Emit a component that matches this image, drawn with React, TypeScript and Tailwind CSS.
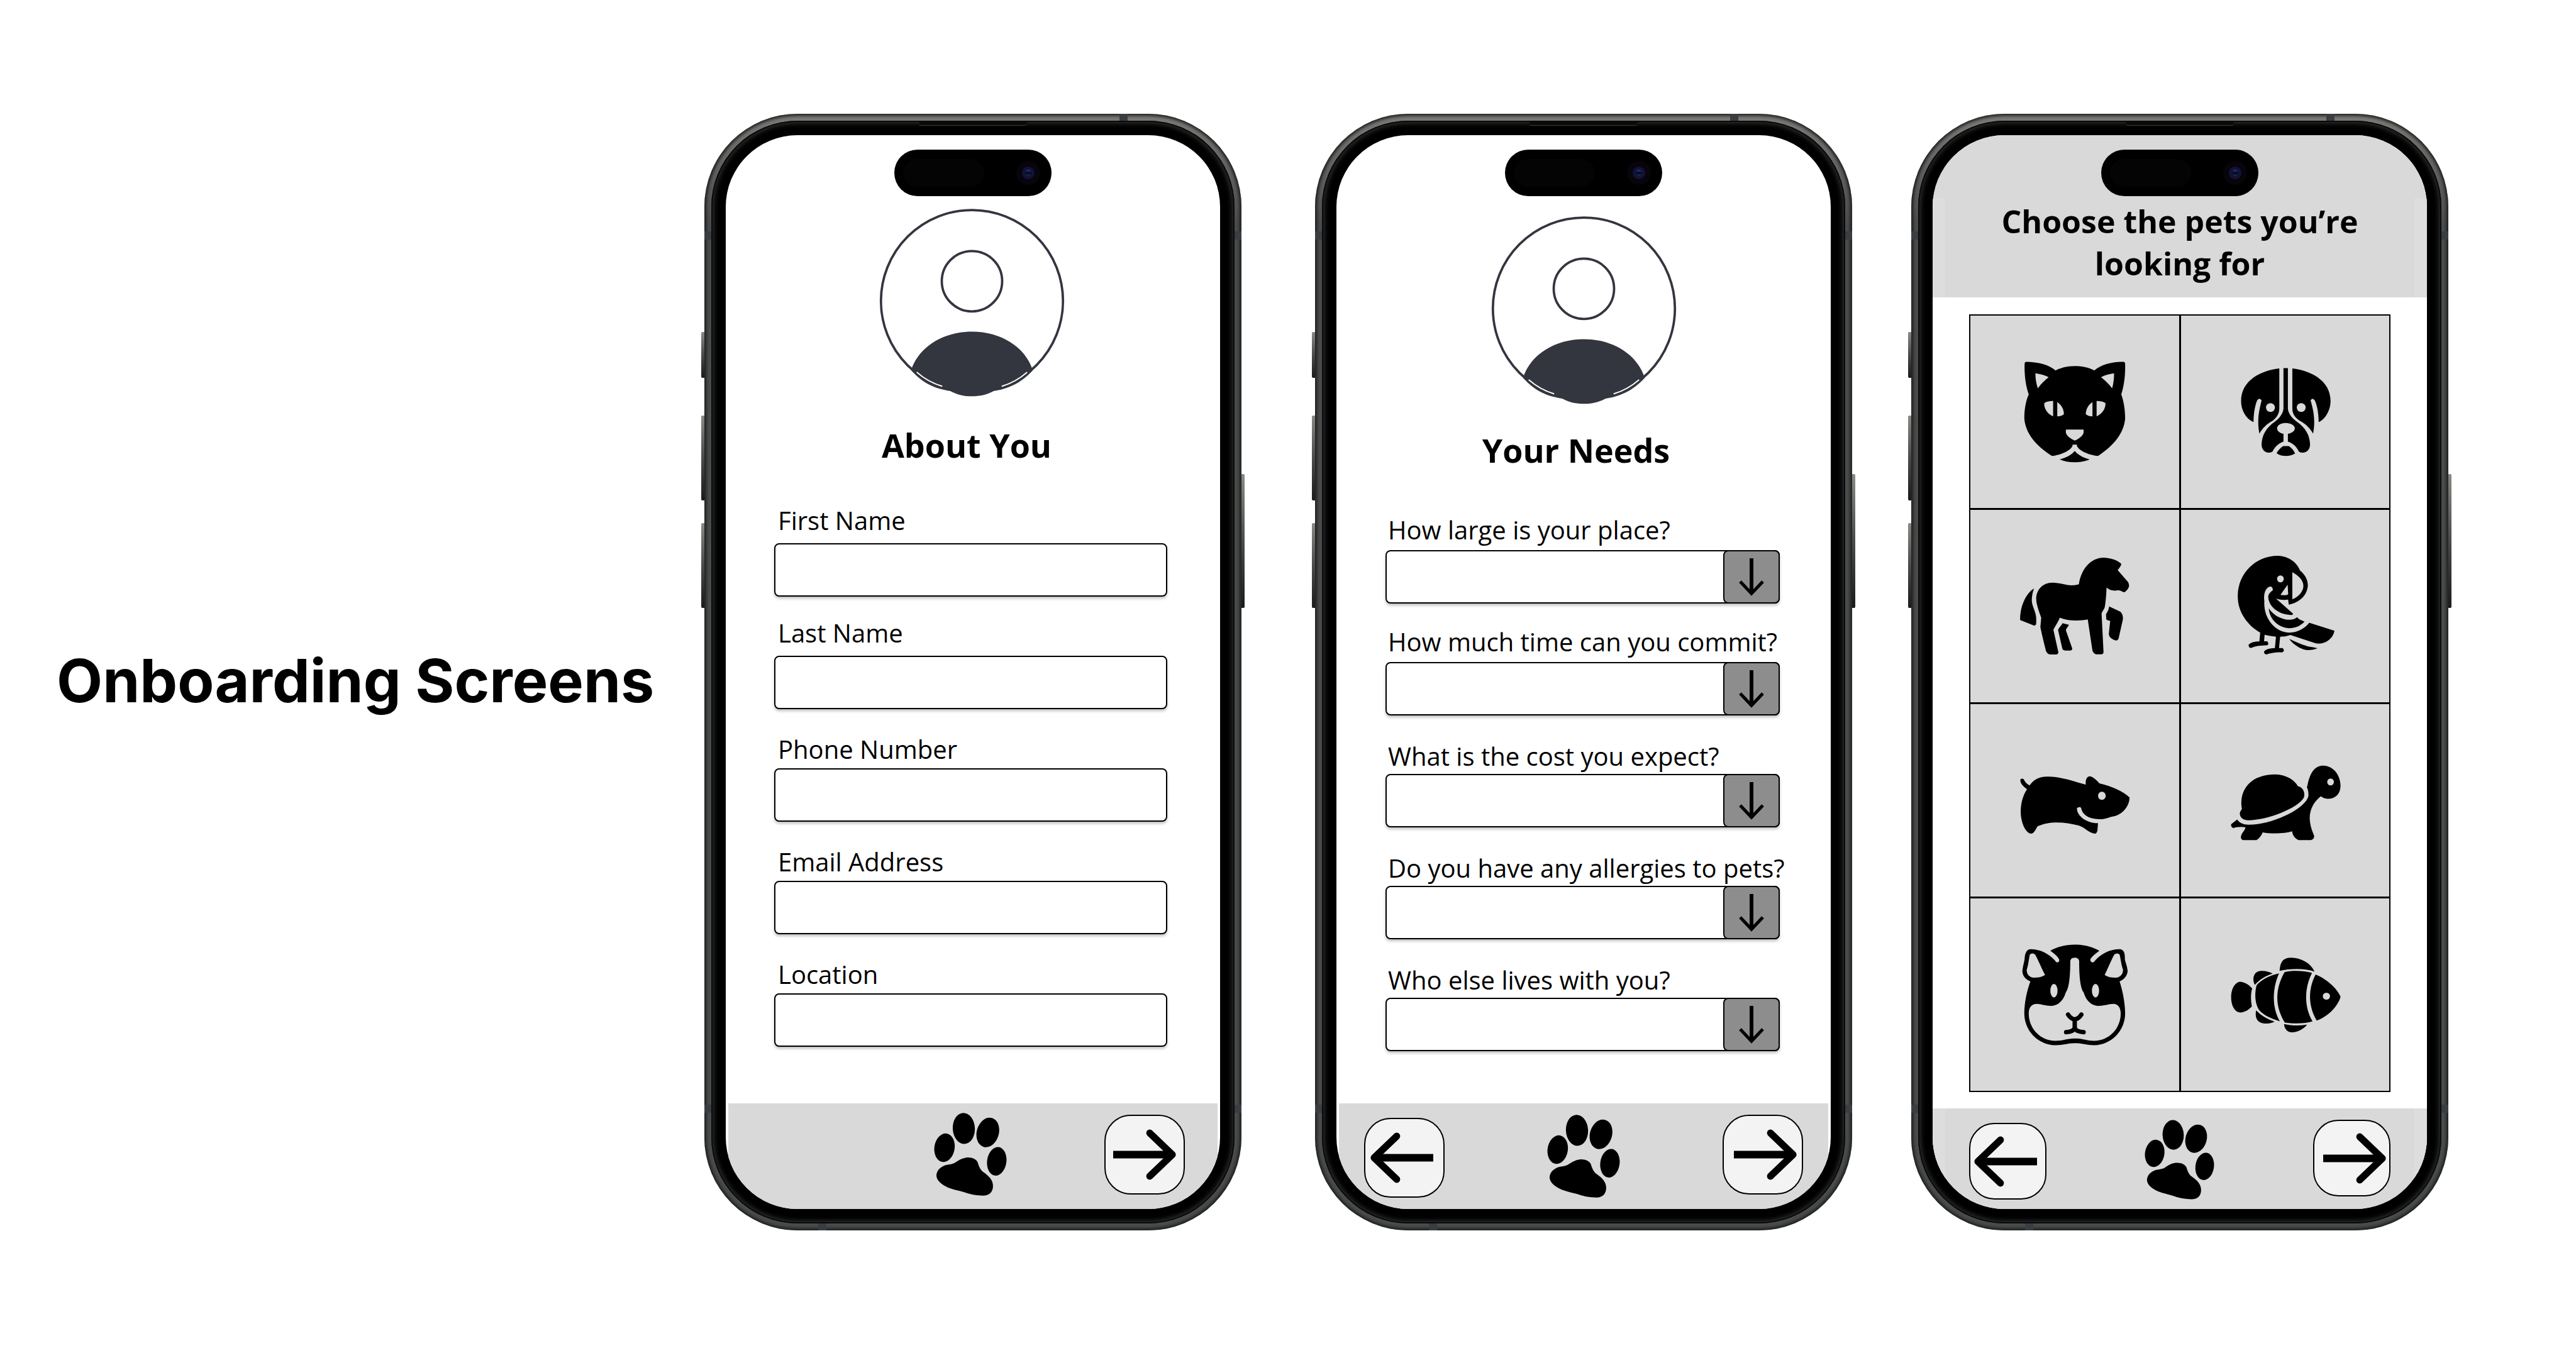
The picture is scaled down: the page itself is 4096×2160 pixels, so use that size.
import type { ReactNode } from 'react';

const sans = "font-['Open_Sans','Noto_Sans',sans-serif]";

/* ---------- Icons ---------- */

function Avatar() {
  return (
    <svg viewBox="0 0 396 402" className="h-[302px] w-[297px] shrink-0" aria-hidden="true">
      <circle cx="198" cy="198" r="193" fill="white" stroke="#33363f" strokeWidth="5" />
      <circle cx="198" cy="156" r="64" fill="none" stroke="#33363f" strokeWidth="5" />
      <path
        fill="#33363f"
        d="M69 345C85 295 137 263 198 263S311 295 327 345C302 373 272 385 244 389C225 399 210 400 198 400C186 400 171 399 152 389C120 384 94 373 69 345Z"
      />
      <path d="M81 349Q105 370 135 379M315 349Q291 370 261 379" fill="none" stroke="white" strokeWidth="2.5" />
    </svg>
  );
}

function Paw({ className }: { className: string }) {
  return (
    <svg viewBox="0 0 155 176" className={className} aria-hidden="true">
      <ellipse cx="22.500" cy="74" rx="21.500" ry="30.500" transform="rotate(9 22.500 74)" />
      <ellipse cx="63.500" cy="33" rx="23.500" ry="33" transform="rotate(-3 63.500 33)" />
      <ellipse cx="114.500" cy="41.500" rx="23.500" ry="32" transform="rotate(16 114.500 41.500)" />
      <ellipse cx="133.500" cy="103" rx="20.500" ry="30.500" transform="rotate(8 133.500 103)" />
      <path d="M69 95C60 96 52 101 46 105C39 110 30 109 22 112C10 117 5 126 5.400 134C6 144 16 152 31 159C42 163 52 165 62 168C76 173 90 176 104 176C118 176 126 168 125.500 154C125 142 116 133 104 125C98 120 95 112 93 105C90 98 80 94 69 95Z" />
    </svg>
  );
}

function Arrow({ back = false }: { back?: boolean }) {
  return (
    <svg
      viewBox="0 0 134 108"
      className={back ? 'h-[81px] w-[100px] rotate-180' : 'h-[81px] w-[100px]'}
      fill="none"
      stroke="black"
      aria-hidden="true"
    >
      <path d="M0 54H124" strokeWidth="16" />
      <path d="M78 8L126 54L78 100" strokeWidth="15" strokeLinecap="round" strokeLinejoin="round" />
    </svg>
  );
}

function DownArrow() {
  return (
    <svg viewBox="0 0 40 60" className="h-[60px] w-[40px]" fill="none" stroke="black" aria-hidden="true">
      <path d="M20 0V55" strokeWidth="6" />
      <path d="M2 37L20 56L38 37" strokeWidth="5" />
    </svg>
  );
}

/* ---------- Pet drawings ---------- */

const pets: { name: string; viewBox: string; art: ReactNode }[] = [
  {
    name: 'Cat',
    viewBox: '194 265 420 740',
    art: (
      <>
        <path d="M405 342C435 342 460 355 476 370C497 335 540 312 582 315Q587 317 587 330C588 400 583 470 573 522C582 565 587 620 587 675C583 770 545 850 489 914C455 908 420 880 413 850V842H397V850C390 880 355 908 323 914C265 850 227 770 223 675C223 620 228 565 239 522C228 470 223 400 224 330Q224 317 229 315C272 315 314 335 336 370C352 355 375 342 405 342ZM263 388C280 392 297 400 311 413C297 433 283 455 272 484C266 455 263 420 263 388ZM547 388C530 392 513 400 500 413C514 433 528 455 540 484C545 455 547 420 547 388ZM327 564V662C305 645 294 610 295 578C303 567 315 564 327 564ZM342 571C358 590 366 620 366 648C360 658 352 662 342 662ZM484 564V662C505 645 517 610 516 578C508 567 496 564 484 564ZM469 571C453 590 445 620 445 648C451 658 459 662 469 662ZM373 746H437V765C435 785 420 805 405 816C390 805 375 785 373 765Z" />
        <path d="M405 882C415 905 435 925 459 936C430 960 380 960 351 936C375 925 395 905 405 882Z" />
      </>
    ),
  },
  {
    name: 'Dog',
    viewBox: '955 265 420 740',
    art: (
      <>
        <path d="M1144 357C1080 370 1006 430 1006 565C1006 620 1022 675 1049 697H1051C1051 640 1057 590 1064 560Q1072 540 1080 560C1075 600 1068 640 1068 700C1068 730 1070 750 1072 772C1082 740 1098 710 1120 690C1138 665 1144 640 1144 610Z" />
        <path d="M1191 357C1254 370 1329 430 1329 565C1329 620 1312 675 1289 697H1286C1286 640 1280 590 1272 560Q1264 540 1257 560C1263 600 1270 640 1270 700C1270 730 1268 750 1266 772C1256 740 1240 710 1218 690C1197 665 1191 640 1191 610Z" />
        <path d="M1159 355H1175V610C1175 640 1188 670 1205 693C1240 735 1254 785 1255 840C1255 870 1245 890 1230 893Q1220 893 1215 887C1205 850 1190 830 1175 823V773C1190 768 1200 755 1200 738C1200 720 1185 704 1167 704C1149 704 1136 720 1136 738C1136 755 1145 768 1159 773V823C1145 830 1130 850 1119 887Q1112 893 1104 893C1090 890 1080 870 1080 840C1081 785 1095 735 1130 693C1146 670 1159 640 1159 610Z" />
        <path d="M1158 851H1178C1188 862 1196 878 1201 898C1192 908 1180 914 1168 914C1155 914 1142 908 1134 896C1140 878 1148 862 1158 851Z" />
        <ellipse cx="1112" cy="606" rx="16" ry="28" fill="#d9d9d9" />
        <ellipse cx="1223" cy="606" rx="16" ry="28" fill="#d9d9d9" />
      </>
    ),
  },
  {
    name: 'Horse',
    viewBox: '194 243 420 740',
    art: (
      <>
        <path d="M420 472C428 380 460 303 511 303C540 306 565 325 573 343Q573 355 560 382L597 457Q602 470 601 485C599 500 594 510 586 522H580Q572 512 562 510C545 517 530 510 520 493C519 540 516 600 513 620C510 635 502 650 502 660L509 905Q508 918 500 918H482Q474 915 469 895L452 696C415 708 380 705 351 685C345 715 332 745 328 762L346 905Q345 918 338 919H317Q305 917 301 895C293 840 285 780 281 745L284 685C275 640 266 600 266 565C266 510 288 462 325 462C350 463 372 477 392 479Q408 479 420 472Z" />
        <path d="M258 500C235 520 207 600 208 700L258 735Q266 735 266 718V690C266 650 250 610 250 575C250 550 253 520 258 500Z" />
        <path d="M361 720L384 730C382 742 374 752 373 765L396 880Q396 892 390 894H370Q362 892 360 880L345 765C346 750 356 738 361 720Z" />
        <path d="M529 613L570 647Q580 665 579 695L563 820Q558 832 553 830Q530 818 528 790L533 705Q520 700 519 695L518 665C521 650 529 635 529 613Z" />
      </>
    ),
  },
  {
    name: 'Bird',
    viewBox: '955 243 420 740',
    art: (
      <>
        <path d="M1140 291C1180 295 1208 335 1219 385C1235 408 1247 440 1247 480C1245 545 1215 590 1178 602L1176 570C1160 573 1148 572 1132 563L1194 660L1190 668C1140 668 1104 610 1104 550C1105 535 1112 520 1120 512C1122 490 1114 486 1110 487C1095 495 1086 530 1090 580C1086 690 1130 780 1182 780C1210 778 1235 755 1252 717L1343 768C1338 820 1310 850 1287 850Q1275 850 1265 842L1184 795C1170 803 1160 806 1147 806L1143 878H1155Q1162 885 1160 898Q1155 908 1148 905C1130 905 1110 910 1098 919Q1088 917 1089 900C1095 885 1110 880 1128 878L1132 806C1115 803 1100 798 1091 793L1089 835H1100Q1105 842 1104 855Q1100 863 1093 861C1070 862 1055 868 1042 878Q1033 875 1033 858C1040 842 1055 836 1072 836L1075 780C1030 735 993 650 994 545C995 400 1060 290 1140 291ZM1191 395C1225 430 1231 460 1231 485C1230 520 1212 555 1191 568ZM1174 475L1148 540Q1165 545 1176 537Z" />
        <path d="M1106 625C1120 665 1150 698 1180 698Q1198 698 1208 682L1216 695L1235 710C1220 738 1200 752 1180 752C1145 750 1108 700 1106 625Z" />
        <path d="M1180 820C1210 845 1240 868 1263 872L1282 879C1270 890 1255 892 1240 890C1220 885 1190 850 1180 820Z" />
        <ellipse cx="1148" cy="438" rx="12" ry="22" fill="#d9d9d9" />
      </>
    ),
  },
  {
    name: 'Hamster',
    viewBox: '194 250 420 740',
    art: (
      <>
        <path d="M242 523C255 490 275 465 310 467C355 467 400 497 445 518C443 490 448 465 460 465C472 468 487 495 494 510C535 525 580 560 603 600C602 660 575 710 545 720C530 725 518 735 508 737C485 740 435 737 428 665Q420 655 413 668C413 720 450 765 489 763L487 810Q484 830 478 830C455 825 445 795 422 780C370 752 310 750 271 783C263 805 258 830 247 830C225 825 210 750 210 690C210 630 220 580 233 547C218 530 207 508 209 485Q215 475 221 484C225 500 233 515 242 523Z" />
        <ellipse cx="503" cy="589" rx="14" ry="26" fill="#d9d9d9" />
      </>
    ),
  },
  {
    name: 'Turtle',
    viewBox: '955 250 420 740',
    art: (
      <>
        <path d="M1009 672C1000 600 1015 455 1130 453C1170 455 1200 490 1211 528C1228 535 1236 560 1234 590C1230 650 1110 745 1030 745C1005 743 998 710 1003 690Z" />
        <path d="M1245 530C1250 480 1262 398 1302 397C1340 398 1365 460 1365 525C1365 580 1345 608 1320 608Q1305 608 1294 592C1265 630 1252 690 1254 740C1256 790 1264 815 1270 845Q1270 865 1258 871H1213C1200 860 1192 840 1190 815C1165 830 1115 832 1084 822C1080 840 1072 860 1062 871H1013Q1003 865 1006 845C1008 825 1020 810 1022 790C1010 785 995 785 979 794Q969 790 970 770L992 740C1000 762 1015 774 1035 773C1120 773 1240 670 1249 590C1250 565 1247 545 1243 533Z" />
        <ellipse cx="1329" cy="501" rx="12" ry="22" fill="#d9d9d9" />
      </>
    ),
  },
  {
    name: 'Guinea pig',
    viewBox: '194 257 420 740',
    art: (
      <>
        <path d="M405 307C440 307 470 322 494 346C480 365 465 385 461 402Q463 425 474 418C495 370 530 335 568 336C582 338 587 360 586 400C590 430 595 450 596 475C595 505 583 530 567 541C578 600 587 680 587 745C587 850 540 945 475 947C445 947 435 935 405 934C375 935 365 947 335 947C270 945 223 850 223 745C223 680 232 600 245 541C228 530 216 505 216 475C217 450 221 430 224 400C225 360 232 338 244 336C282 335 318 370 338 418Q350 425 349 402C345 385 332 365 317 346C340 322 370 307 405 307ZM405 390Q419 390 421 410C421 480 423 580 437 610C445 660 465 697 490 697C510 697 525 685 545 684C560 685 571 705 571 745C571 840 530 918 475 919C448 919 435 905 405 904C375 905 362 919 335 919C280 918 239 840 239 745C239 705 250 685 268 684C285 685 300 697 320 697C345 697 365 660 373 610C387 580 389 480 389 410Q391 390 405 390ZM243 370Q252 355 262 370C275 410 285 460 298 500C285 515 270 518 255 517C240 515 230 490 232 465C238 435 239 400 243 370ZM567 370Q558 355 548 370C535 410 525 460 513 500C525 515 540 518 555 517C570 515 581 490 579 465C573 435 571 400 567 370Z" />
        <ellipse cx="330" cy="600" rx="13" ry="43" fill="#d9d9d9" />
        <ellipse cx="480" cy="600" rx="13" ry="43" fill="#d9d9d9" />
        <path
          d="M381 752Q390 778 405 783Q420 778 429 752M405 783V835Q402 860 374 864M405 835Q408 860 437 864"
          fill="none"
          stroke="black"
          strokeWidth="7"
          strokeLinecap="round"
          vectorEffect="non-scaling-stroke"
        />
      </>
    ),
  },
  {
    name: 'Fish',
    viewBox: '955 257 420 740',
    art: (
      <>
        <path d="M1003 543C1020 545 1035 565 1046 585C1040 625 1041 660 1045 700C1035 720 1020 738 1003 739C985 738 970 700 970 640C970 585 985 545 1003 543Z" />
        <path d="M1056 563C1045 530 1050 475 1078 474C1095 473 1108 480 1120 491C1095 505 1072 530 1056 563Z" />
        <path d="M1145 474C1147 435 1150 392 1185 390C1225 390 1260 430 1271 479C1235 455 1180 460 1145 474Z" />
        <path d="M1143 490C1120 580 1115 700 1146 795C1110 775 1080 750 1068 715C1055 670 1055 610 1062 565C1080 530 1105 505 1143 490Z" />
        <path d="M1163 482C1190 470 1230 472 1262 487C1235 580 1232 700 1264 795C1235 812 1195 810 1164 803C1128 700 1128 590 1163 482Z" />
        <path d="M1275 497C1315 525 1355 590 1365 640C1355 700 1320 765 1279 790C1248 700 1247 590 1275 497Z" />
        <path d="M1060 725C1080 760 1100 780 1127 797C1115 808 1100 810 1090 809C1065 805 1055 775 1060 725Z" />
        <path d="M1161 812C1185 822 1215 825 1244 816C1235 840 1210 865 1190 865C1172 865 1162 840 1161 812Z" />
        <ellipse cx="1314" cy="635" rx="13" ry="22" fill="#d9d9d9" />
      </>
    ),
  },
];

/* ---------- Phone shell ---------- */

const sideButton = 'absolute w-[6px] rounded-[2px] bg-linear-to-b from-[#8a8a85] via-[#4b4c4a] to-[#1b1b1b]';
const band = 'absolute bg-[#3a3d41]';

function Phone({ label, className = '', children }: { label: string; className?: string; children: ReactNode }) {
  return (
    <section aria-label={label} className={`relative min-w-0 flex-1 ${className}`}>
      <span className={`${sideButton} top-[347px] -left-[5px] h-[73px]`} />
      <span className={`${sideButton} top-[480px] -left-[5px] h-[135px]`} />
      <span className={`${sideButton} top-[651px] -left-[5px] h-[135px]`} />
      <span className={`${sideButton} top-[573px] -right-[5px] h-[213px]`} />
      <div className="relative rounded-[148px] bg-linear-to-b from-[#7c7b77] via-[#4a4c4b] via-10% to-[#4a4c4b] p-[11px] shadow-[inset_0_0_5px_3px_#1c1e1f]">
        <span className={`${band} top-0 right-[181px] h-[11px] w-[13px]`} />
        <span className={`${band} bottom-0 left-[181px] h-[11px] w-[13px]`} />
        <span className={`${band} top-[187px] left-0 h-[13px] w-[11px]`} />
        <span className={`${band} top-[187px] right-0 h-[13px] w-[11px]`} />
        <span className={`${band} bottom-[187px] left-0 h-[13px] w-[11px]`} />
        <span className={`${band} right-0 bottom-[187px] h-[13px] w-[11px]`} />
        <div className="relative rounded-[137px] bg-black p-[23px] shadow-[inset_0_0_0_2px_#0a0a0a,inset_0_0_8px_3px_#3c3c3c]">
          <span className="absolute top-[2px] left-1/2 h-[6px] w-[172px] -translate-x-1/2 rounded-b-[4px] border-b border-[#3a3a3a] bg-[#0b0b0b]" />
          <div className="relative flex min-h-[1708px] flex-col overflow-hidden rounded-[114px] bg-white">
            <div className="absolute top-[23px] left-1/2 flex h-[74px] w-[250px] -translate-x-1/2 items-center justify-between rounded-full bg-black pr-[18px] pl-[14px]">
              <span className="h-[44px] w-[129px] rounded-full bg-[#040404]" />
              <span className="flex size-[38px] items-center justify-center rounded-full bg-[#08040b]">
                <span className="flex size-[20px] items-center justify-center rounded-full bg-[#12123a]">
                  <span className="size-[10px] rounded-full bg-linear-to-b from-[#3c3c8c] via-[#05051c] to-[#0d3a48]" />
                </span>
              </span>
            </div>
            {children}
          </div>
        </div>
      </div>
    </section>
  );
}

function NavButton({ back = false, centered = false, className }: { back?: boolean; centered?: boolean; className: string }) {
  const shift = centered ? '' : back ? 'pr-2' : 'pl-2';
  return (
    <button
      type="button"
      aria-label={back ? 'Back' : 'Next'}
      className={`flex items-center justify-center border-2 border-black bg-[#f3f3f3] ${shift} ${className}`}
    >
      <Arrow back={back} />
    </button>
  );
}

/* ---------- Form pieces ---------- */

const box =
  'h-[85px] w-full rounded-[8px] border-2 border-black bg-white px-6 text-[40px] shadow-[0_3px_4px_rgba(0,0,0,0.25)]';
const labelText = 'text-[40px] leading-[48px] font-medium whitespace-nowrap';

function TextField({ id, label, tight }: { id: string; label: string; tight: boolean }) {
  return (
    <div className="flex flex-col">
      <label htmlFor={id} className={`${labelText} pl-[6px] ${tight ? 'pt-[6px] pb-[6px]' : 'pb-3'}`}>
        {label}
      </label>
      <input id={id} type="text" className={box} />
    </div>
  );
}

function SelectField({ id, label, tight }: { id: string; label: string; tight: boolean }) {
  return (
    <div className="flex flex-col">
      <label htmlFor={id} className={`${labelText} pl-1 ${tight ? 'pt-1 pb-1' : 'pb-2'}`}>
        {label}
      </label>
      <div className="relative">
        <select id={id} className={`${box} block appearance-none`} defaultValue="">
          <option value="" />
        </select>
        <span className="pointer-events-none absolute inset-y-0 right-0 flex w-[90px] items-center justify-center rounded-[8px] border-2 border-black bg-[#8d8d8d]">
          <DownArrow />
        </span>
      </div>
    </div>
  );
}

const aboutFields = ['First Name', 'Last Name', 'Phone Number', 'Email Address', 'Location'];
const needFields = [
  'How large is your place?',
  'How much time can you commit?',
  'What is the cost you expect?',
  'Do you have any allergies to pets?',
  'Who else lives with you?',
];

export default function App() {
  return (
    <main className={`flex min-h-screen items-center bg-white pr-[203px] pb-[22px] text-black ${sans}`}>
      <h1 className="w-[1120px] shrink-0 pt-7 pl-[90px] font-['Inter',sans-serif] text-[95px] leading-[120px] font-bold whitespace-nowrap">
        Onboarding Screens
      </h1>

      <Phone label="About You">
        <div className="flex flex-col items-center pt-[115px] pr-1">
          <Avatar />
          <h2 className="mt-[44px] pr-4 text-[52px] leading-[64px] font-bold">About You</h2>
        </div>
        <form className="mt-[64px] mr-[84px] ml-[77px] flex flex-1 flex-col gap-[34px]">
          {aboutFields.map((f, i) => (
            <TextField key={f} id={`about-${i}`} label={f} tight={i > 1} />
          ))}
        </form>
        <footer className="mx-1 grid h-[168px] grid-cols-3 items-start bg-[#d9d9d9]">
          <Paw className="col-start-2 mt-[15px] mr-2 h-[132px] w-[116px] justify-self-center" />
          <NavButton centered className="mt-[18px] mr-[52px] h-[127px] w-[128px] justify-self-end rounded-[42px]" />
        </footer>
      </Phone>

      <Phone label="Your Needs" className="ml-[117px]">
        <div className="flex flex-col items-center pt-[127px]">
          <Avatar />
          <h2 className="mt-[40px] pr-6 text-[52px] leading-[64px] font-bold">Your Needs</h2>
        </div>
        <form className="mt-[71px] mr-[81px] ml-[78px] flex flex-1 flex-col gap-[37px]">
          {needFields.map((f, i) => (
            <SelectField key={f} id={`needs-${i}`} label={f} tight={i > 1} />
          ))}
        </form>
        <footer className="mx-1 grid h-[168px] grid-cols-3 items-start bg-[#d9d9d9]">
          <NavButton back className="mt-[23px] ml-[40px] h-[127px] w-[128px] rounded-[42px]" />
          <Paw className="mt-[18px] h-[132px] w-[116px] justify-self-center" />
          <NavButton className="mt-[18px] mr-[40px] h-[127px] w-[128px] justify-self-end rounded-[42px]" />
        </footer>
      </Phone>

      <Phone label="Choose pets" className="ml-[94px]">
        <header className="bg-[#d9d9d9] pt-[100px]">
          <div className="h-[158px] border-x-[20px] border-[#dddddd] px-4">
            <h2 className="mx-auto w-[620px] pt-1 text-center text-[50px] leading-[67px] font-bold">
              Choose the pets you’re looking for
            </h2>
          </div>
        </header>
        <div className="mx-[58px] mt-[27px] grid grid-cols-2 gap-[3px] border-2 border-black bg-black">
          {pets.map((pet) => (
            <button
              key={pet.name}
              type="button"
              aria-label={pet.name}
              className="flex h-[306px] items-center justify-center bg-[#d9d9d9]"
            >
              <svg
                viewBox={pet.viewBox}
                preserveAspectRatio="none"
                fillRule="evenodd"
                className="size-[185px]"
                aria-hidden="true"
              >
                {pet.art}
              </svg>
            </button>
          ))}
        </div>
        <footer className="mt-auto grid h-[160px] grid-cols-3 items-start border-x-[20px] border-[#dddddd] bg-[#d9d9d9]">
          <NavButton back className="mt-[23px] ml-[38px] h-[122px] w-[123px] rounded-[40px]" />
          <Paw className="mt-[18px] h-[127px] w-[111px] justify-self-center" />
          <NavButton className="mt-[18px] mr-[38px] h-[122px] w-[123px] justify-self-end rounded-[40px]" />
        </footer>
      </Phone>
    </main>
  );
}
